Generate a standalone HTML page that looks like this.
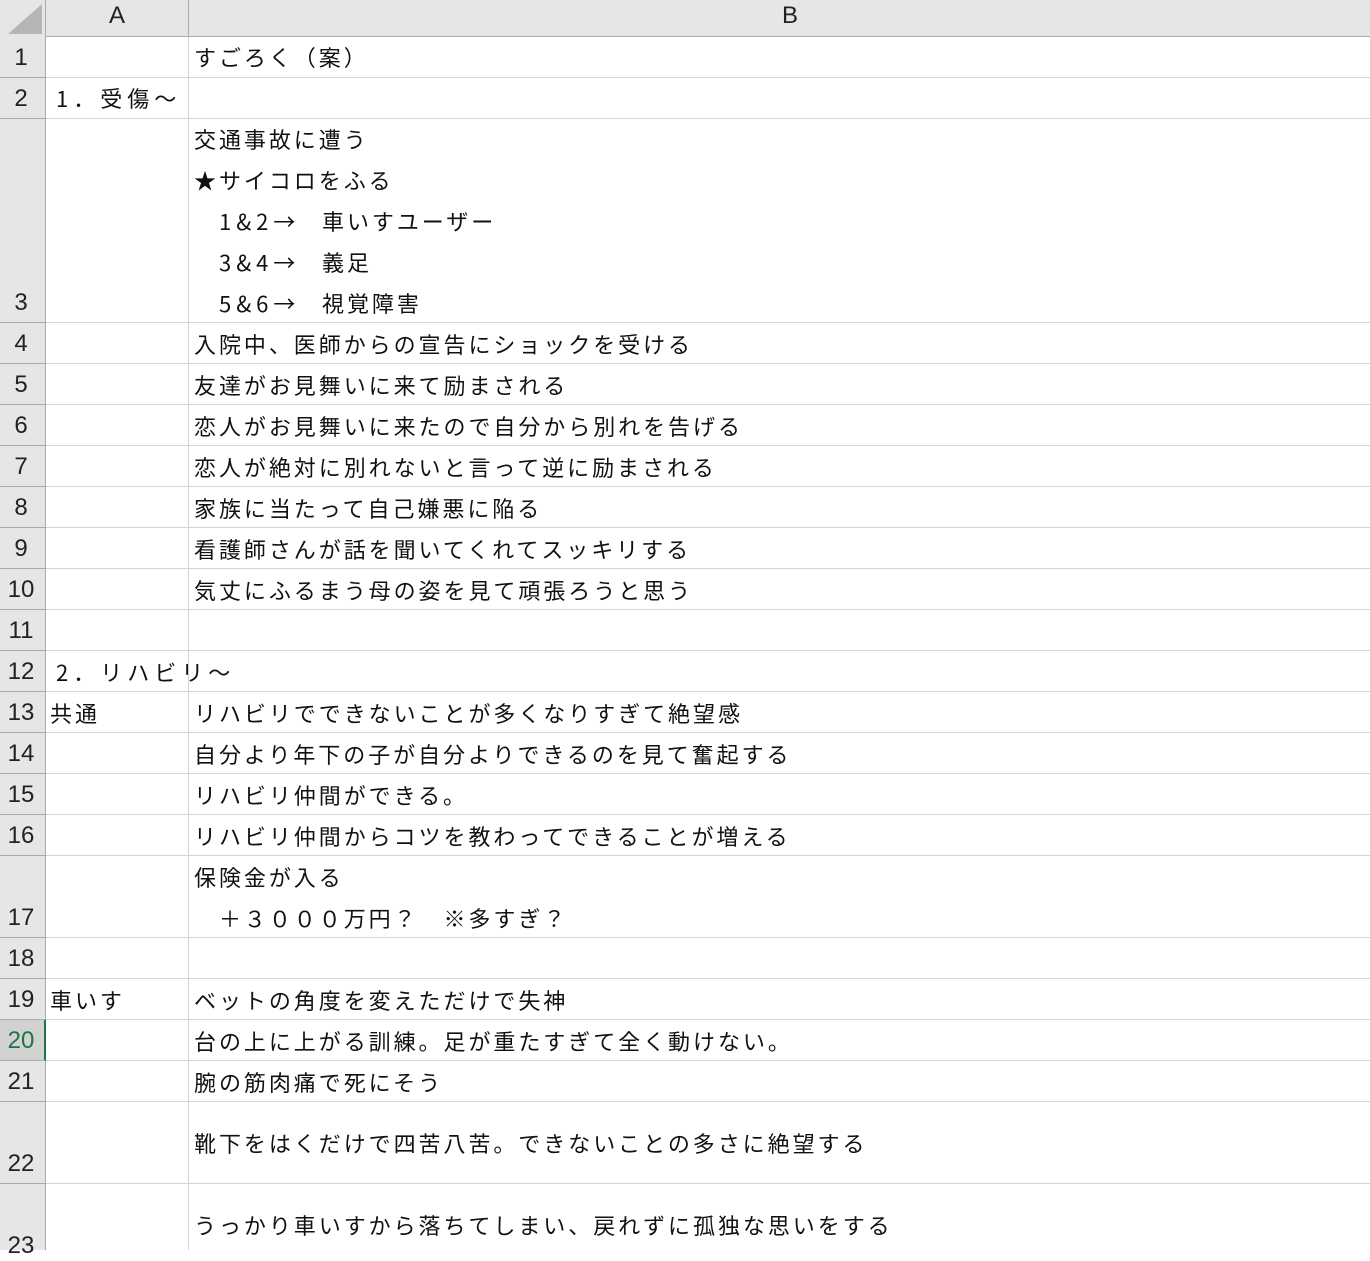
<!DOCTYPE html>
<html><head><meta charset="utf-8"><style>
body{margin:0;width:1370px;height:1250px;overflow:hidden;background:#fff;position:relative;font-family:"Liberation Sans","Noto Sans CJK JP",sans-serif}
.h{position:absolute;background:#d4d4d4}
.t{position:absolute;font-size:22px;letter-spacing:2.95px;line-height:32px;color:#111;white-space:pre;font-family:"Noto Sans CJK JP","Liberation Sans",sans-serif;font-weight:400}
.n{position:absolute;left:0;width:42px;text-align:center;font-size:24px;line-height:30px;color:#222}
.w{letter-spacing:5px}
</style></head><body>
<div style="position:absolute;left:0;top:0;width:1370px;height:36px;background:#e6e6e6;border-bottom:1px solid #ababab"></div>
<div style="position:absolute;left:0;top:0;width:45px;height:1250px;background:#e6e6e6;border-right:1px solid #ababab"></div>
<svg style="position:absolute;left:8px;top:4px" width="34" height="30"><polygon points="34,0 34,30 0,30" fill="#b5b5b5"/></svg>
<div style="position:absolute;left:188px;top:0;width:1px;height:36px;background:#ababab"></div>
<div style="position:absolute;left:46px;width:142px;top:2px;text-align:center;font-size:24px;color:#222">A</div>
<div style="position:absolute;left:189px;width:1202px;top:2px;text-align:center;font-size:24px;color:#222">B</div>
<div class="h" style="left:188px;top:37px;width:1px;height:1213px"></div>
<div style="position:absolute;left:0;top:1020px;width:45px;height:40px;background:#d2d2d2"></div>
<div style="position:absolute;left:44px;top:1020px;width:2px;height:41px;background:#217346"></div>
<div id="g"></div>
<script>
var b=[36,77,118,322,363,404,445,486,527,568,609,650,691,732,773,814,855,937,978,1019,1060,1101,1183,1265];
var h='';
for(var i=1;i<b.length;i++){
 if(b[i]<1250){h+='<div class="h" style="left:46px;top:'+b[i]+'px;width:1324px;height:1px"></div><div style="position:absolute;left:0;top:'+b[i]+'px;width:45px;height:1px;background:#ababab"></div>';}
 var c=i==20?'color:#217346':'';
 h+='<div class="n" style="top:'+(b[i]-34)+'px;'+c+'">'+i+'</div>';
}
function T(x,y,s,cl){h+='<div class="t '+(cl||'')+'" style="left:'+x+'px;top:'+(y-16)+'px">'+s+'</div>';}
T(56,98,'1．受傷～','w');
T(194,57,'すごろく（案）');
T(194,139,'交通事故に遭う');
T(194,180,'★サイコロをふる');
T(219,221,'1&amp;2→','w');T(322,221,'車いすユーザー');
T(219,262,'3&amp;4→','w');T(322,262,'義足');
T(219,303,'5&amp;6→','w');T(322,303,'視覚障害');
var L=['入院中、医師からの宣告にショックを受ける','友達がお見舞いに来て励まされる','恋人がお見舞いに来たので自分から別れを告げる','恋人が絶対に別れないと言って逆に励まされる','家族に当たって自己嫌悪に陥る','看護師さんが話を聞いてくれてスッキリする','気丈にふるまう母の姿を見て頑張ろうと思う'];
for(var k=0;k<L.length;k++)T(194,344+41*k,L[k]);
T(56,672,'2．リハビリ～','w');
T(50,713,'共通');
T(194,713,'リハビリでできないことが多くなりすぎて絶望感');
T(194,754,'自分より年下の子が自分よりできるのを見て奮起する');
T(194,795,'リハビリ仲間ができる。');
T(194,836,'リハビリ仲間からコツを教わってできることが増える');
T(194,877,'保険金が入る');
T(194,918,'　＋３０００万円？　※多すぎ？');
T(50,1000,'車いす');
T(194,1000,'ベットの角度を変えただけで失神');
T(194,1041,'台の上に上がる訓練。足が重たすぎて全く動けない。');
T(194,1082,'腕の筋肉痛で死にそう');
T(194,1143,'靴下をはくだけで四苦八苦。できないことの多さに絶望する');
T(194,1225,'うっかり車いすから落ちてしまい、戻れずに孤独な思いをする');
document.getElementById('g').innerHTML=h;
</script>
</body></html>
